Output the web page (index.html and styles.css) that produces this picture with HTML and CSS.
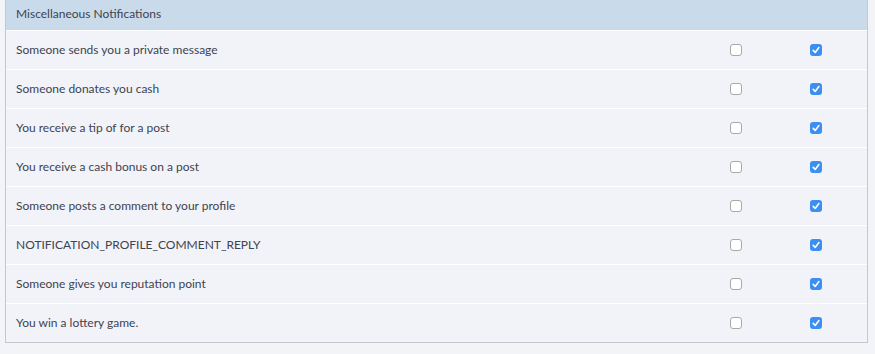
FILE: index.html
```html
<!DOCTYPE html>
<html>
<head>
<meta charset="utf-8">
<link rel="stylesheet" href="styles.css">
</head>
<body>
<div class="panel">
  <div class="head">Miscellaneous Notifications</div>
  <div class="row"><span class="label">Someone sends you a private message</span><span class="cell"><span class="cb"></span></span><span class="cell"><span class="cb on"><svg viewBox="0 0 12 12"><path d="M3.2 6.4 L5.2 8.4 L8.9 3.6" /></svg></span></span></div>
  <div class="row"><span class="label">Someone donates you cash</span><span class="cell"><span class="cb"></span></span><span class="cell"><span class="cb on"><svg viewBox="0 0 12 12"><path d="M3.2 6.4 L5.2 8.4 L8.9 3.6" /></svg></span></span></div>
  <div class="row"><span class="label">You receive a tip of for a post</span><span class="cell"><span class="cb"></span></span><span class="cell"><span class="cb on"><svg viewBox="0 0 12 12"><path d="M3.2 6.4 L5.2 8.4 L8.9 3.6" /></svg></span></span></div>
  <div class="row"><span class="label">You receive a cash bonus on a post</span><span class="cell"><span class="cb"></span></span><span class="cell"><span class="cb on"><svg viewBox="0 0 12 12"><path d="M3.2 6.4 L5.2 8.4 L8.9 3.6" /></svg></span></span></div>
  <div class="row"><span class="label">Someone posts a comment to your profile</span><span class="cell"><span class="cb"></span></span><span class="cell"><span class="cb on"><svg viewBox="0 0 12 12"><path d="M3.2 6.4 L5.2 8.4 L8.9 3.6" /></svg></span></span></div>
  <div class="row"><span class="label">NOTIFICATION_PROFILE_COMMENT_REPLY</span><span class="cell"><span class="cb"></span></span><span class="cell"><span class="cb on"><svg viewBox="0 0 12 12"><path d="M3.2 6.4 L5.2 8.4 L8.9 3.6" /></svg></span></span></div>
  <div class="row"><span class="label">Someone gives you reputation point</span><span class="cell"><span class="cb"></span></span><span class="cell"><span class="cb on"><svg viewBox="0 0 12 12"><path d="M3.2 6.4 L5.2 8.4 L8.9 3.6" /></svg></span></span></div>
  <div class="row"><span class="label">You win a lottery game.</span><span class="cell"><span class="cb"></span></span><span class="cell"><span class="cb on"><svg viewBox="0 0 12 12"><path d="M3.2 6.4 L5.2 8.4 L8.9 3.6" /></svg></span></span></div>
</div>
</body>
</html>
```
FILE: styles.css
```css
html, body {
  margin: 0;
  padding: 0;
  background: #f3f4f8;
}
body {
  font-family: Lato, "Noto Sans", sans-serif;
  font-size: 12px;
  color: #3d4350;
  padding-left: 5px;
}
.panel {
  width: 861px;
  border-left: 1px solid #c3c6d3;
  border-right: 1px solid #c3c6d3;
  border-bottom: 1px solid #c3c6d3;
}
.head {
  height: 30px;
  line-height: 28px;
  background: #c9dbeb;
  padding-left: 10px;
  color: #3d4350;
}
.row {
  display: grid;
  grid-template-columns: 1fr 80px 80px;
  padding-right: 11px;
  height: 38px;
  border-top: 1px solid #ffffff;
  background: #f2f3f8;
  align-items: center;
}
.label {
  padding-left: 10px;
  padding-bottom: 1px;
}
.cell {
  display: flex;
  justify-content: center;
  align-items: center;
}
.cb {
  box-sizing: border-box;
  width: 12px;
  height: 12px;
  border: 1px solid #a8a8a8;
  border-radius: 3px;
  background: #ffffff;
  display: block;
}
.cb.on {
  border: none;
  background: #3b8ff3;
}
.cb svg {
  display: block;
  width: 12px;
  height: 12px;
}
.cb svg path {
  fill: none;
  stroke: #ffffff;
  stroke-width: 1.6;
  stroke-linecap: round;
  stroke-linejoin: round;
}
```
